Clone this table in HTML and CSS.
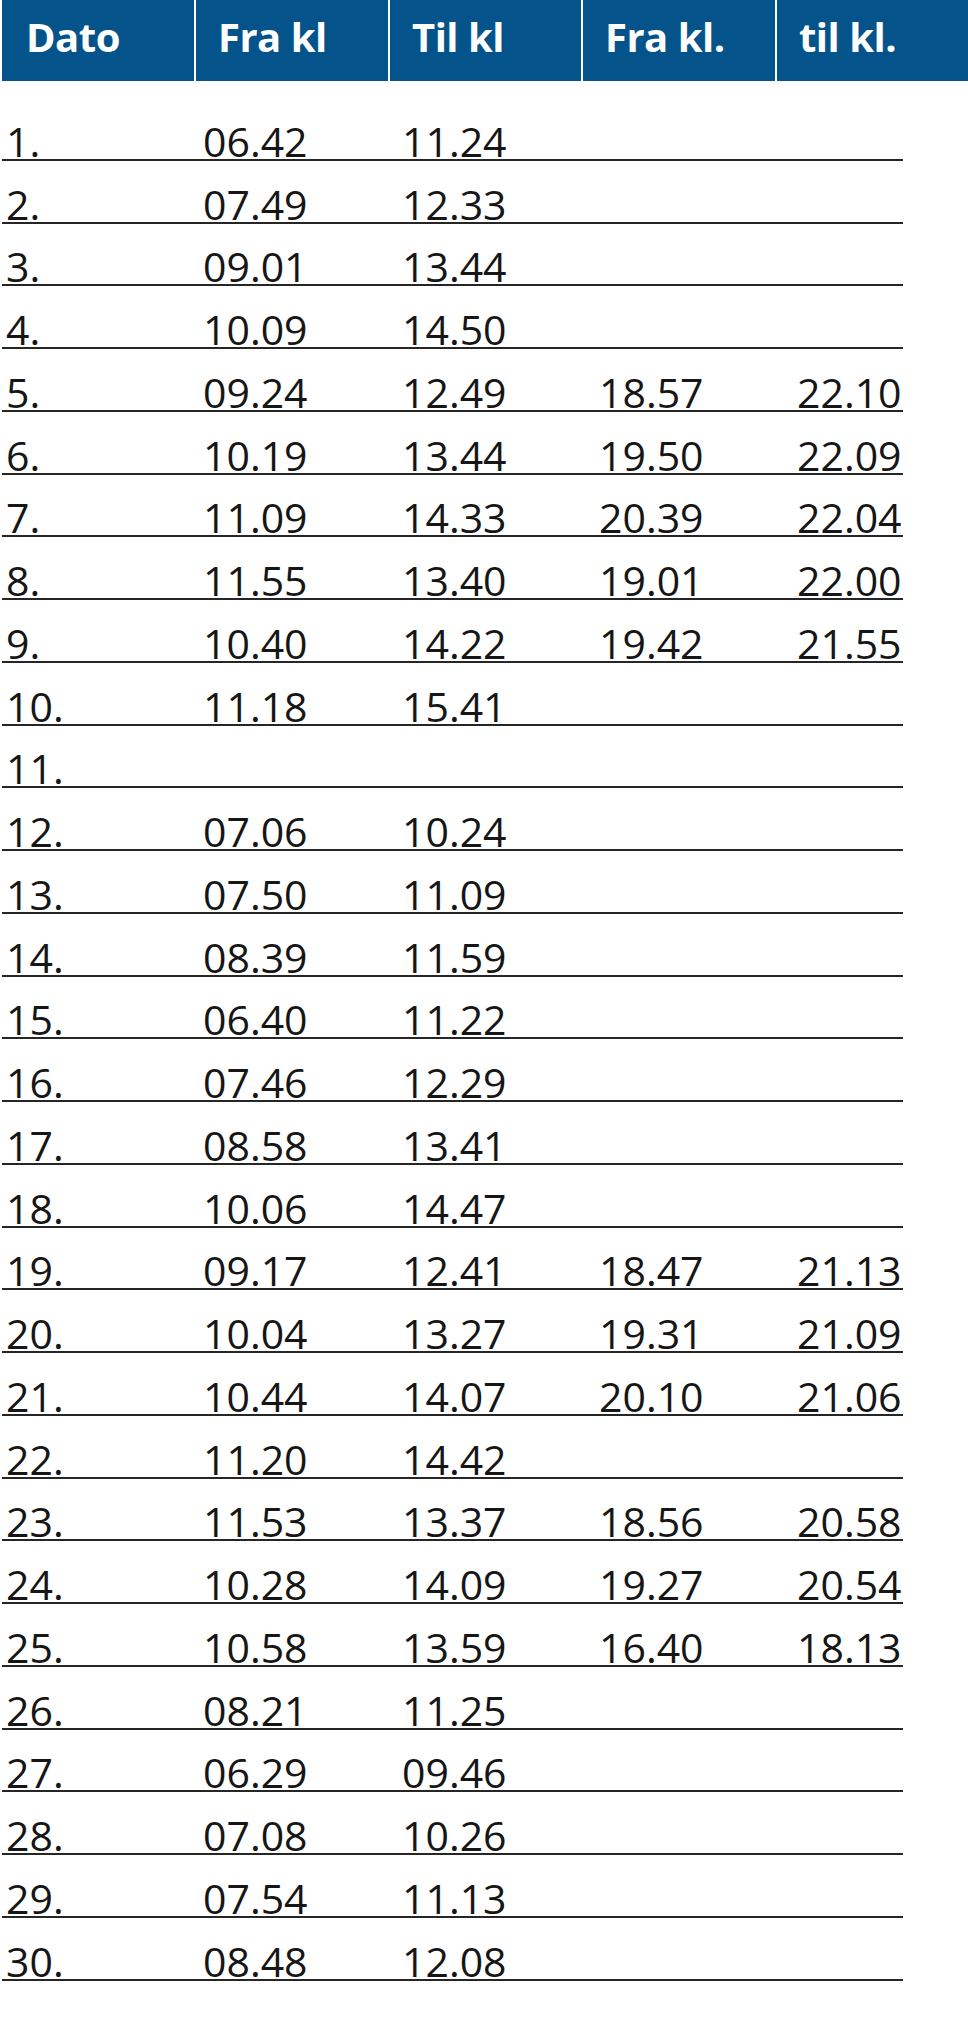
FILE: index.html
```html
<!DOCTYPE html>
<html lang="no">
<head>
<meta charset="utf-8">
<title>Tider</title>
<link rel="stylesheet" href="styles.css">
</head>
<body>
<div class="sheet">
  <div class="head">
    <div class="hcell first">Dato</div>
    <div class="hcell">Fra kl</div>
    <div class="hcell">Til kl</div>
    <div class="hcell">Fra kl.</div>
    <div class="hcell">til kl.</div>
  </div>
  <div class="rows">
    <div class="row"><span>1.</span><span>06.42</span><span>11.24</span><span></span><span></span></div>
    <div class="row"><span>2.</span><span>07.49</span><span>12.33</span><span></span><span></span></div>
    <div class="row"><span>3.</span><span>09.01</span><span>13.44</span><span></span><span></span></div>
    <div class="row"><span>4.</span><span>10.09</span><span>14.50</span><span></span><span></span></div>
    <div class="row"><span>5.</span><span>09.24</span><span>12.49</span><span>18.57</span><span>22.10</span></div>
    <div class="row"><span>6.</span><span>10.19</span><span>13.44</span><span>19.50</span><span>22.09</span></div>
    <div class="row"><span>7.</span><span>11.09</span><span>14.33</span><span>20.39</span><span>22.04</span></div>
    <div class="row"><span>8.</span><span>11.55</span><span>13.40</span><span>19.01</span><span>22.00</span></div>
    <div class="row"><span>9.</span><span>10.40</span><span>14.22</span><span>19.42</span><span>21.55</span></div>
    <div class="row"><span>10.</span><span>11.18</span><span>15.41</span><span></span><span></span></div>
    <div class="row"><span>11.</span><span></span><span></span><span></span><span></span></div>
    <div class="row"><span>12.</span><span>07.06</span><span>10.24</span><span></span><span></span></div>
    <div class="row"><span>13.</span><span>07.50</span><span>11.09</span><span></span><span></span></div>
    <div class="row"><span>14.</span><span>08.39</span><span>11.59</span><span></span><span></span></div>
    <div class="row"><span>15.</span><span>06.40</span><span>11.22</span><span></span><span></span></div>
    <div class="row"><span>16.</span><span>07.46</span><span>12.29</span><span></span><span></span></div>
    <div class="row"><span>17.</span><span>08.58</span><span>13.41</span><span></span><span></span></div>
    <div class="row"><span>18.</span><span>10.06</span><span>14.47</span><span></span><span></span></div>
    <div class="row"><span>19.</span><span>09.17</span><span>12.41</span><span>18.47</span><span>21.13</span></div>
    <div class="row"><span>20.</span><span>10.04</span><span>13.27</span><span>19.31</span><span>21.09</span></div>
    <div class="row"><span>21.</span><span>10.44</span><span>14.07</span><span>20.10</span><span>21.06</span></div>
    <div class="row"><span>22.</span><span>11.20</span><span>14.42</span><span></span><span></span></div>
    <div class="row"><span>23.</span><span>11.53</span><span>13.37</span><span>18.56</span><span>20.58</span></div>
    <div class="row"><span>24.</span><span>10.28</span><span>14.09</span><span>19.27</span><span>20.54</span></div>
    <div class="row"><span>25.</span><span>10.58</span><span>13.59</span><span>16.40</span><span>18.13</span></div>
    <div class="row"><span>26.</span><span>08.21</span><span>11.25</span><span></span><span></span></div>
    <div class="row"><span>27.</span><span>06.29</span><span>09.46</span><span></span><span></span></div>
    <div class="row"><span>28.</span><span>07.08</span><span>10.26</span><span></span><span></span></div>
    <div class="row"><span>29.</span><span>07.54</span><span>11.13</span><span></span><span></span></div>
    <div class="row"><span>30.</span><span>08.48</span><span>12.08</span><span></span><span></span></div>
  </div>
</div>
</body>
</html>
```
FILE: styles.css
```css
html, body {
  margin: 0;
  padding: 0;
  background: #ffffff;
}

.sheet {
  padding-left: 2px;
  font-family: "Open Sans", "Noto Sans", "DejaVu Sans", sans-serif;
}

.head {
  display: grid;
  grid-template-columns: 192px 194px 193px 194px 1fr;
  height: 81px;
  background: #04538a;
  margin-bottom: 17.24px;
}

.hcell {
  color: #ffffff;
  font-weight: 700;
  font-size: 40px;
  line-height: 73px;
  padding-left: 22px;
  border-left: 2px solid #ffffff;
  white-space: nowrap;
  letter-spacing: -0.5px;
}

.hcell.first {
  border-left: 0;
  padding-left: 24px;
}

.rows {
  width: 901px;
}

.row {
  display: grid;
  grid-template-columns: 197px 199px 197px 198px 1fr;
  align-items: end;
  padding-left: 4px;
  height: 60.76px;
  border-bottom: 2px solid #262626;
  color: #161616;
  font-size: 41px;
  line-height: 36px;
}

.row span {
  white-space: nowrap;
}
```
